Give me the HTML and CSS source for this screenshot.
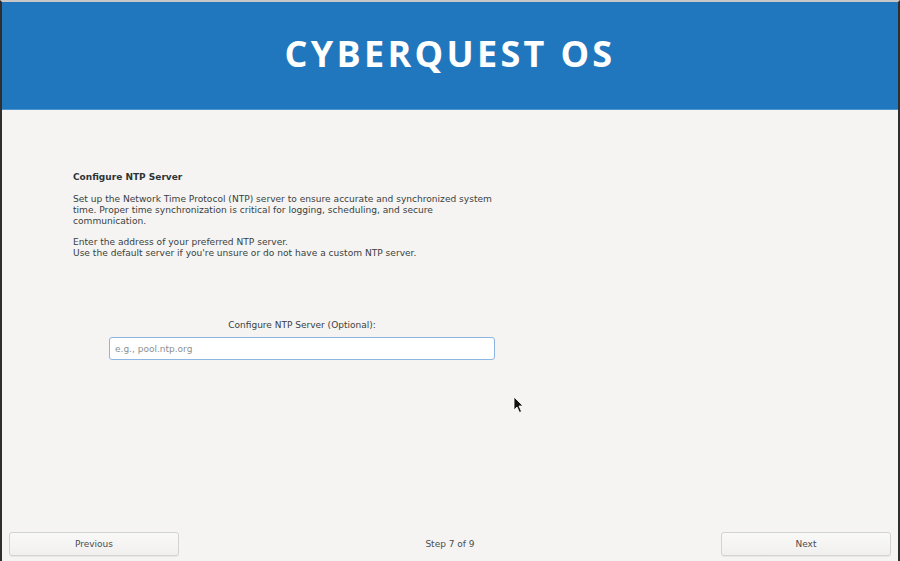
FILE: index.html
```html
<!DOCTYPE html>
<html lang="en">
<head>
<meta charset="utf-8">
<title>CyberQuest OS Setup</title>
<link rel="stylesheet" href="styles.css">
</head>
<body>
<div class="window">
  <header class="banner">
    <h1 class="brand">CYBERQUEST OS</h1>
  </header>
  <main class="content">
    <section class="intro">
      <h2 class="intro-title">Configure NTP Server</h2>
      <p class="intro-text">Set up the Network Time Protocol (NTP) server to ensure accurate and synchronized system time. Proper time synchronization is critical for logging, scheduling, and secure communication.</p>
      <p class="intro-text">Enter the address of your preferred NTP server.<br>Use the default server if you're unsure or do not have a custom NTP server.</p>
    </section>
    <div class="field">
      <label class="field-label" for="ntp">Configure NTP Server (Optional):</label>
      <input class="field-input" id="ntp" type="text" placeholder="e.g., pool.ntp.org">
    </div>
  </main>
  <footer class="nav">
    <button class="nav-btn" type="button">Previous</button>
    <span class="step">Step 7 of 9</span>
    <button class="nav-btn" type="button">Next</button>
  </footer>
  <svg class="pointer" width="12" height="18" viewBox="0 0 12 18" aria-hidden="true">
    <path d="M1 1 L1 14 L4 11 L6.5 16.5 L8.5 15.5 L6 10 L10 10 Z" fill="#111" stroke="#fff" stroke-width="0.8"/>
  </svg>
</div>
</body>
</html>
```
FILE: styles.css
```css
* { box-sizing: border-box; }

html, body {
  margin: 0;
  padding: 0;
  width: 900px;
  height: 561px;
  overflow: hidden;
  background: #f5f4f2;
}

.window {
  position: relative;
  width: 900px;
  height: 561px;
  display: flex;
  flex-direction: column;
  border-left: 2px solid #2e2e2e;
  border-right: 2px solid #2e2e2e;
  border-top: 2px solid #c8c8c8;
  background: #f5f4f2;
  font-family: "DejaVu Sans", sans-serif;
  color: #2e3436;
}

.banner {
  height: 108px;
  background: #2177bd;
  border-bottom: 1px solid #4d95cf;
  display: flex;
  align-items: center;
  justify-content: center;
}

.brand {
  margin: 0;
  color: #ffffff;
  font-family: "Open Sans", sans-serif;
  font-weight: 700;
  font-size: 36px;
  letter-spacing: 3.3px;
  padding-bottom: 4px;
}

.content {
  flex: 1;
  display: flex;
  flex-direction: column;
  padding: 62px 0 0 71px;
}

.intro {
  width: 430px;
}

.intro-title {
  margin: 0 0 12px;
  font-size: 9px;
  font-weight: bold;
  color: #2e3436;
}

.intro-text {
  margin: 0 0 10px;
  font-size: 9.08px;
  line-height: 11px;
  color: #3a3f41;
}

.field {
  width: 386px;
  margin: 51px 0 0 36px;
  display: flex;
  flex-direction: column;
  align-items: center;
  gap: 7px;
}

.field-label {
  font-size: 9px;
  color: #3a3f41;
}

.field-input {
  width: 386px;
  height: 23px;
  border: 1px solid #8db5e2;
  border-radius: 3px;
  background: #ffffff;
  padding: 0 5px;
  font-family: "DejaVu Sans", sans-serif;
  font-size: 9px;
  color: #2e3436;
  outline: none;
}

.field-input::placeholder {
  color: #8c8f8f;
}

.nav {
  height: 29px;
  display: flex;
  align-items: flex-start;
  justify-content: space-between;
  padding: 0 7px 0 7px;
}

.nav-btn {
  width: 170px;
  height: 24px;
  border: 1px solid #d6d2cd;
  border-radius: 3px;
  background: linear-gradient(#f9f9f8, #f1f0ee);
  font-family: "DejaVu Sans", sans-serif;
  font-size: 9px;
  color: #4a4d4e;
  box-shadow: 0 1px 0 rgba(0, 0, 0, 0.05);
}

.step {
  font-size: 9px;
  line-height: 24px;
  color: #4a4d4e;
}

.pointer {
  position: absolute;
  left: 511px;
  top: 394px;
}
```
